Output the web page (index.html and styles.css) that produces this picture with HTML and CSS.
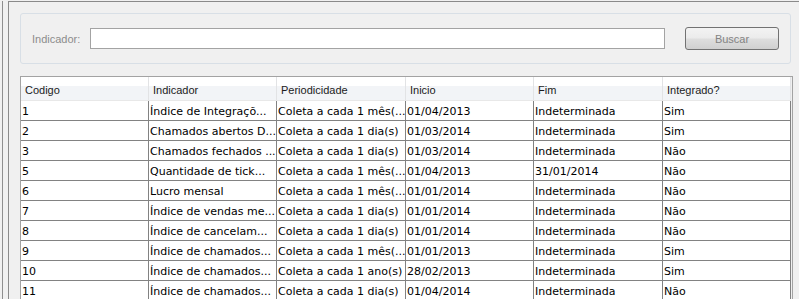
FILE: index.html
```html
<!DOCTYPE html>
<html lang="pt">

<head>
    <meta charset="UTF-8">
    <title>Indicadores</title>
    <link rel="stylesheet" href="styles.css">
</head>

<body>
    <div class="window">
        <div class="panel">
            <div class="search-box">
                <label class="search-label" for="indicador">Indicador:</label>
                <input class="search-input" id="indicador" type="text">
                <button class="search-button">Buscar</button>
            </div>

            <div class="grid-wrap">
                <table class="grid">
                    <colgroup>
                        <col class="col-a">
                        <col class="col-a">
                        <col class="col-b">
                        <col class="col-a">
                        <col class="col-b">
                        <col class="col-a">
                    </colgroup>
                    <thead>
                        <tr>
                            <th>Codigo</th>
                            <th>Indicador</th>
                            <th>Periodicidade</th>
                            <th>Inicio</th>
                            <th>Fim</th>
                            <th>Integrado?</th>
                        </tr>
                    </thead>
                    <tbody>
                        <tr>
                            <td>1</td>
                            <td>Índice de Integraçõ...</td>
                            <td>Coleta a cada 1 mês(...</td>
                            <td>01/04/2013</td>
                            <td>Indeterminada</td>
                            <td>Sim</td>
                        </tr>
                        <tr>
                            <td>2</td>
                            <td>Chamados abertos D...</td>
                            <td>Coleta a cada 1 dia(s)</td>
                            <td>01/03/2014</td>
                            <td>Indeterminada</td>
                            <td>Sim</td>
                        </tr>
                        <tr>
                            <td>3</td>
                            <td>Chamados fechados ...</td>
                            <td>Coleta a cada 1 dia(s)</td>
                            <td>01/03/2014</td>
                            <td>Indeterminada</td>
                            <td>Não</td>
                        </tr>
                        <tr>
                            <td>5</td>
                            <td>Quantidade de tick...</td>
                            <td>Coleta a cada 1 mês(...</td>
                            <td>01/04/2013</td>
                            <td>31/01/2014</td>
                            <td>Não</td>
                        </tr>
                        <tr>
                            <td>6</td>
                            <td>Lucro mensal</td>
                            <td>Coleta a cada 1 mês(...</td>
                            <td>01/01/2014</td>
                            <td>Indeterminada</td>
                            <td>Não</td>
                        </tr>
                        <tr>
                            <td>7</td>
                            <td>Índice de vendas me...</td>
                            <td>Coleta a cada 1 dia(s)</td>
                            <td>01/01/2014</td>
                            <td>Indeterminada</td>
                            <td>Não</td>
                        </tr>
                        <tr>
                            <td>8</td>
                            <td>Índice de cancelam...</td>
                            <td>Coleta a cada 1 dia(s)</td>
                            <td>01/01/2014</td>
                            <td>Indeterminada</td>
                            <td>Não</td>
                        </tr>
                        <tr>
                            <td>9</td>
                            <td>Índice de chamados...</td>
                            <td>Coleta a cada 1 mês(...</td>
                            <td>01/01/2013</td>
                            <td>Indeterminada</td>
                            <td>Sim</td>
                        </tr>
                        <tr>
                            <td>10</td>
                            <td>Índice de chamados...</td>
                            <td>Coleta a cada 1 ano(s)</td>
                            <td>28/02/2013</td>
                            <td>Indeterminada</td>
                            <td>Sim</td>
                        </tr>
                        <tr>
                            <td>11</td>
                            <td>Índice de chamados...</td>
                            <td>Coleta a cada 1 dia(s)</td>
                            <td>01/04/2014</td>
                            <td>Indeterminada</td>
                            <td>Não</td>
                        </tr>
                    </tbody>
                </table>
            </div>
        </div>
    </div>
</body>

</html>
```

FILE: styles.css
```css
html,
body {
    height: 100%;
}

body {
    margin: 0;
    background: #f0f0f0;
    font-family: 'Liberation Sans', Arial, sans-serif;
    overflow: hidden;
}

/* outer window frame */
.window {
    height: 100%;
    margin-left: 2px;
    padding-left: 5px;
    border-left: 1px solid #8e8e8e;
}

.panel {
    height: 100%;
    margin-top: 1px;
    padding: 11px 8px 0 11px;
    border-top: 1px solid #8a8a8a;
    border-left: 1px solid #8a8a8a;
}

/* search group */
.search-box {
    display: flex;
    align-items: center;
    height: 49px;
    padding: 0 11px;
    border: 1px solid #d8dfe6;
    border-radius: 3px;
}

.search-label {
    width: 48px;
    margin-right: 10px;
    font-size: 11px;
    color: #8c8c8c;
}

.search-input {
    flex: 1;
    height: 21px;
    box-sizing: border-box;
    margin: 0 20px 0 0;
    border: 1px solid #a3a3a3;
    background: #ffffff;
}

.search-button {
    width: 94px;
    height: 23px;
    padding: 0;
    border: 1px solid #727272;
    border-radius: 3px;
    background: linear-gradient(#f3f3f3, #ebebeb 48%, #dedede 52%, #d0d0d0);
    font-family: inherit;
    font-size: 11px;
    color: #838383;
}

/* results grid */
.grid-wrap {
    margin: 12px -2px 0 0;
    border: 1px solid #a3a3a3;
    background: #f0f0f0;
}

.grid {
    table-layout: fixed;
    width: 770px;
    border-collapse: separate;
    border-spacing: 0;
    background: #ffffff;
}

.col-a {
    width: 128px;
}

.col-b {
    width: 129px;
}

.grid th {
    height: 24px;
    padding: 3px 0 0 4px;
    box-sizing: border-box;
    border-right: 1px solid #e2e3e5;
    border-bottom: 1px solid #e8e8e8;
    background: linear-gradient(#ffffff, #ffffff 38%, #f2f4f7 40%, #f2f4f7);
    text-align: left;
    font-weight: normal;
    font-size: 11px;
    color: #1b1b1b;
}

.grid td {
    height: 20px;
    box-sizing: border-box;
    padding: 2px 0 0 1px;
    border-right: 1px solid #828282;
    border-bottom: 1px solid #828282;
    font-family: 'DejaVu Sans', Verdana, sans-serif;
    font-size: 11px;
    color: #000000;
    white-space: nowrap;
    overflow: hidden;
}
```
